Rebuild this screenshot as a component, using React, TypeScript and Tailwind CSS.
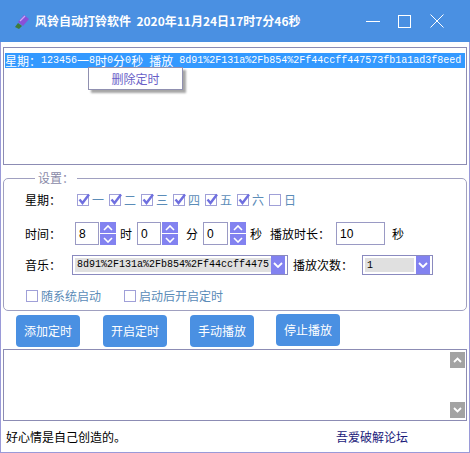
import React from 'react'

const cjk = "font-['Noto_Sans_CJK_SC',sans-serif]"

// split into CJK runs (12px) and ascii runs (10px mono) to mimic SimSun widths
function MonoLine({ text }: { text: string }): React.JSX.Element {
  const runs = text.match(/[\u3000-\u9fff\uff00-\uffef]+|[^\u3000-\u9fff\uff00-\uffef]+/g) || []
  return (
    <>
      {runs.map((r, i) =>
        /[\u3000-\u9fff\uff00-\uffef]/.test(r) ? (
          <span key={i} className="font-['Noto_Sans_CJK_SC',sans-serif] text-[12px] leading-[14px]">
            {r}
          </span>
        ) : (
          <span key={i} className="font-['Liberation_Mono',monospace] text-[10px] leading-[14px] whitespace-pre">
            {r}
          </span>
        ),
      )}
    </>
  )
}

function Check({ checked, label, className = '' }: { checked?: boolean; label: string; className?: string }) {
  return (
    <div className={`flex items-center ${className}`}>
      <div className="relative h-[12px] w-[12px] border border-[#a0a0d8] bg-white">
        {checked && (
          <svg className="absolute -left-[1px] -top-[3px]" width="14" height="14" viewBox="0 0 14 14">
            <path d="M2.5 7.5 L5.5 11 L12 2.5" stroke="#6f6fe0" strokeWidth="2.4" fill="none" />
          </svg>
        )}
      </div>
      <span className={`${cjk} ml-[3px] text-[12px] leading-none text-[#5b8cb8]`}>{label}</span>
    </div>
  )
}

function Spinner({ className = '' }: { className?: string }) {
  return (
    <div className={`flex h-[23px] w-[16px] flex-col gap-[1px] ${className}`}>
      <div className="flex flex-1 items-center justify-center bg-[#8282f0]">
        <svg width="10" height="6" viewBox="0 0 10 6">
          <path d="M1 5 L5 1 L9 5" stroke="white" strokeWidth="1.6" fill="none" />
        </svg>
      </div>
      <div className="flex flex-1 items-center justify-center bg-[#8282f0]">
        <svg width="10" height="6" viewBox="0 0 10 6">
          <path d="M1 1 L5 5 L9 1" stroke="white" strokeWidth="1.6" fill="none" />
        </svg>
      </div>
    </div>
  )
}

function NumBox({ value, w, className = '' }: { value: string; w: string; className?: string }) {
  return (
    <div
      className={`flex h-[23px] items-center border border-[#9a9ac4] bg-white pl-[3px] font-['Liberation_Sans',sans-serif] text-[12px] text-black ${w} ${className}`}
    >
      {value}
    </div>
  )
}

function Combo({ children, className = '', fieldW }: { children: React.ReactNode; className?: string; fieldW: string }) {
  return (
    <div className={`flex h-[20px] items-center border border-[#8a8abf] bg-white p-[2px] ${className}`}>
      <div className={`flex h-full items-center overflow-hidden whitespace-nowrap bg-[#e0e0e0] pl-[2px] ${fieldW}`}>
        {children}
      </div>
      <div className="ml-auto flex h-[18px] w-[14px] items-center justify-center bg-[#8282f0]">
        <svg width="10" height="6" viewBox="0 0 10 6">
          <path d="M1 1 L5 5 L9 1" stroke="white" strokeWidth="1.8" fill="none" />
        </svg>
      </div>
    </div>
  )
}

function BlueButton({ label, className = '' }: { label: string; className?: string }) {
  return (
    <div
      className={`flex h-[32px] w-[64px] items-center justify-center rounded-[4px] bg-[#4a90e2] ${cjk} text-[12px] text-white ${className}`}
    >
      {label}
    </div>
  )
}

export default function App(): React.JSX.Element {
  const days = ['一', '二', '三', '四', '五', '六', '日']
  return (
    <div className={`flex h-[453px] w-[470px] flex-col overflow-hidden bg-white ${cjk}`}>
      {/* title bar */}
      <div className="flex h-[42px] shrink-0 items-center bg-[#4a90e2] text-white">
        <svg className="ml-[14px]" width="17" height="17" viewBox="0 0 17 17">
          <path d="M4 9 L10 2 L15 6 L9 13 Z" fill="#8a4fd8" />
          <path d="M6 8 L11 3" stroke="#c9a8f5" strokeWidth="1.2" />
          <path d="M4 10 L8 13 L5 16 L1 14 Z" fill="#3f7a3a" />
        </svg>
        <span className="ml-[4px] whitespace-pre text-[12px] font-bold">
          风铃自动打铃软件  2020年11月24日17时7分46秒
        </span>
        <svg className="ml-auto" width="14" height="14" viewBox="0 0 14 14">
          <path d="M0 7.5 H14" stroke="white" strokeWidth="1" />
        </svg>
        <svg className="ml-[18px]" width="13" height="13" viewBox="0 0 13 13">
          <rect x="0.5" y="0.5" width="12" height="12" stroke="white" fill="none" strokeWidth="1" />
        </svg>
        <svg className="ml-[19px] mr-[26px]" width="14" height="14" viewBox="0 0 14 14">
          <path d="M0.5 0.5 L13.5 13.5 M13.5 0.5 L0.5 13.5" stroke="white" strokeWidth="1" />
        </svg>
      </div>

      {/* body */}
      <div className="flex flex-1 flex-col border-x border-b border-[#9a9ad8] px-[2px]">
        {/* list box */}
        <div className="relative mt-[5px] h-[118px] shrink-0 border border-[#8c8cb4] px-[1px] pt-[5px]">
          <div className="flex h-[15px] items-center overflow-hidden whitespace-nowrap bg-[#3399ff] text-white">
            <MonoLine text="星期：123456一8时0分0秒 播放 8d91%2F131a%2Fb854%2Ff44ccff447573fb1a1ad3f8eed" />
          </div>
          <div className="absolute left-[84px] top-[19px] flex h-[23px] w-[95px] items-center justify-center border border-[#9090b0] bg-white text-[12px] text-[#6a5fc8] shadow-[3px_3px_2px_rgba(0,0,0,0.35)]">
            删除定时
          </div>
        </div>

        {/* settings group */}
        <fieldset className="mt-[5px] shrink-0 rounded-[5px] border border-[#a0a0c0] pb-[6px] pl-[21px]">
          <legend className="ml-[10px] px-[3px] text-[12px] leading-[16px] text-[#8a8aa8]">设置：</legend>
          <div className="mt-[2px] flex h-[24px] items-center">
            <span className="w-[52px] text-[12px] text-black">星期：</span>
            {days.map((d, i) => (
              <Check key={d} label={d} checked={i < 6} className="w-[32px]" />
            ))}
          </div>
          <div className="mt-[10px] flex h-[23px] items-center text-[12px] text-black">
            <span className="w-[50px]">时间：</span>
            <NumBox value="8" w="w-[24px]" />
            <Spinner className="ml-[1px]" />
            <span className="ml-[4px]">时</span>
            <NumBox value="0" w="w-[24px]" className="ml-[5px]" />
            <Spinner className="ml-[1px]" />
            <span className="ml-[8px]">分</span>
            <NumBox value="0" w="w-[25px]" className="ml-[5px]" />
            <Spinner className="ml-[2px]" />
            <span className="ml-[4px]">秒</span>
            <span className="ml-[8px]">播放时长：</span>
            <NumBox value="10" w="w-[49px]" className="ml-[6px]" />
            <span className="ml-[7px]">秒</span>
          </div>
          <div className="mt-[10px] flex h-[20px] items-center text-[12px] text-black">
            <span className="w-[47px]">音乐：</span>
            <Combo className="w-[216px]" fieldW="w-[197px]">
              <MonoLine text="8d91%2F131a%2Fb854%2Ff44ccff4475" />
            </Combo>
            <span className="ml-[5px]">播放次数：</span>
            <Combo className="ml-[9px] w-[71px]" fieldW="w-[49px]">
              <span className="font-['Liberation_Mono',monospace] text-[10px]">1</span>
            </Combo>
          </div>
          <div className="mt-[13px] flex h-[16px] items-center">
            <Check label="随系统启动" className="ml-[1px]" />
            <Check label="启动后开启定时" className="ml-[23px]" />
          </div>
        </fieldset>

        {/* buttons */}
        <div className="mt-[3px] flex h-[33px] shrink-0 items-start pl-[13px]">
          <BlueButton label="添加定时" className="mt-[1px]" />
          <BlueButton label="开启定时" className="ml-[23px] mt-[1px]" />
          <BlueButton label="手动播放" className="ml-[23px] mt-[1px]" />
          <BlueButton label="停止播放" className="ml-[22px]" />
        </div>

        {/* log box */}
        <div className="mt-[2px] flex h-[72px] shrink-0 justify-end border border-[#8c8cb4] py-[2px] pr-[1px]">
          <div className="flex w-[15px] flex-col justify-between">
            <div className="flex h-[16px] items-center justify-center bg-[#a3a3a3]">
              <svg width="9" height="6" viewBox="0 0 9 6">
                <path d="M1 5 L4.5 1.5 L8 5" stroke="white" strokeWidth="1.8" fill="none" />
              </svg>
            </div>
            <div className="flex h-[16px] items-center justify-center bg-[#a3a3a3]">
              <svg width="9" height="6" viewBox="0 0 9 6">
                <path d="M1 1 L4.5 4.5 L8 1" stroke="white" strokeWidth="1.8" fill="none" />
              </svg>
            </div>
          </div>
        </div>

        {/* status line */}
        <div className="relative flex flex-1 items-center px-[3px] text-[12px]">
          <span className="text-black">好心情是自己创造的。</span>
          <span className="ml-auto mr-[56px] text-[#1a1a7a]">吾爱破解论坛</span>
        </div>
      </div>
    </div>
  )
}
